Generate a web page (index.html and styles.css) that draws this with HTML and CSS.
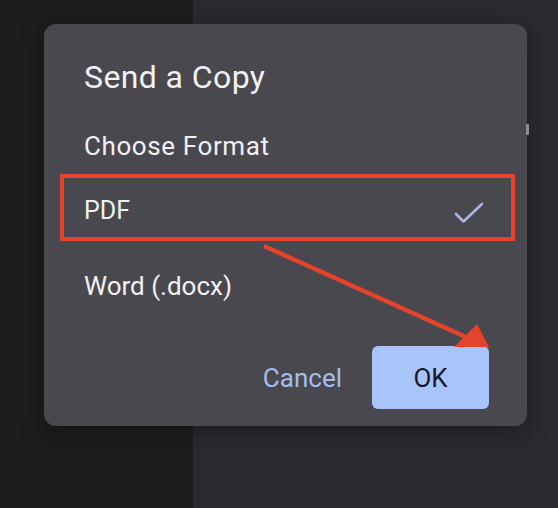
FILE: index.html
```html
<!DOCTYPE html>
<html>
<head>
<meta charset="utf-8">
<link rel="stylesheet" href="styles.css">
</head>
<body>
<div class="screen">
  <div class="side"></div>
  <div class="main"></div>
</div>
<div class="dialog">
  <h1 class="title">Send a Copy</h1>
  <div class="subtitle">Choose Format</div>
  <div class="option selected">
    <span>PDF</span>
    <svg class="check" width="30" height="22" viewBox="0 0 30 22"><path d="M2 12 L9.5 19.5 L28 2" fill="none" stroke="#a9b5ea" stroke-width="2.6" stroke-linecap="round" stroke-linejoin="round"/></svg>
  </div>
  <div class="option word">Word (.docx)</div>
  <div class="actions">
    <button class="btn cancel">Cancel</button>
    <button class="btn ok">OK</button>
  </div>
  <div class="highlight"></div>
  <div class="sliver"></div>
</div>
<svg class="arrow" width="558" height="508" viewBox="0 0 558 508">
  <line x1="264" y1="246" x2="468" y2="338" stroke="#e5432b" stroke-width="4.5"/>
  <polygon points="477,324 454,347 489,347" fill="#e5432b"/>
</svg>
</body>
</html>
```
FILE: styles.css
```css
* { box-sizing: border-box; }
html, body {
  margin: 0;
  padding: 0;
  width: 558px;
  height: 508px;
  overflow: hidden;
  font-family: Roboto, "Noto Sans", Arial, sans-serif;
}
.screen {
  display: flex;
  width: 558px;
  height: 508px;
}
.side {
  width: 193px;
  background: #1d1d1f;
}
.main {
  flex: 1;
  background: #2b2a2f;
}
.dialog {
  position: absolute;
  left: 44px;
  top: 24px;
  width: 483px;
  height: 402px;
  background: #49484e;
  border-radius: 12px;
  padding: 33px 38px 0 40px;
  box-shadow: 0 6px 24px rgba(0, 0, 0, 0.35);
  color: #f1f1f3;
}
.title {
  margin: 0;
  font-size: 32px;
  font-weight: 400;
  line-height: 40px;
  letter-spacing: 0.4px;
}
.subtitle {
  margin-top: 31px;
  font-size: 26px;
  line-height: 36px;
  letter-spacing: 0.6px;
}
.option {
  font-size: 25px;
  line-height: 36px;
  display: flex;
  align-items: center;
  justify-content: space-between;
}
.selected {
  margin-top: 29px;
  padding-right: 5px;
}
.check {
  display: block;
  margin-top: 3px;
}
.word {
  margin-top: 39px;
  font-size: 26px;
}
.actions {
  margin-top: 42px;
  display: flex;
  justify-content: flex-end;
  align-items: center;
  gap: 30px;
}
.btn {
  font-family: Roboto, "Noto Sans", Arial, sans-serif;
  font-size: 26px;
  border: none;
  padding: 0;
  line-height: 30px;
}
.cancel {
  background: transparent;
  color: #a4bdf0;
}
.ok {
  width: 117px;
  height: 63px;
  background: #a8c4f8;
  color: #15192a;
  border-radius: 6px;
}
.highlight {
  position: absolute;
  left: 16px;
  top: 150px;
  width: 455px;
  height: 67px;
  border: 4.5px solid #e5432b;
}
.sliver {
  position: absolute;
  right: -2px;
  top: 100px;
  width: 3px;
  height: 11px;
  background: #8d8c92;
  border-radius: 1px;
}
.arrow {
  position: absolute;
  left: 0;
  top: 0;
}
```
